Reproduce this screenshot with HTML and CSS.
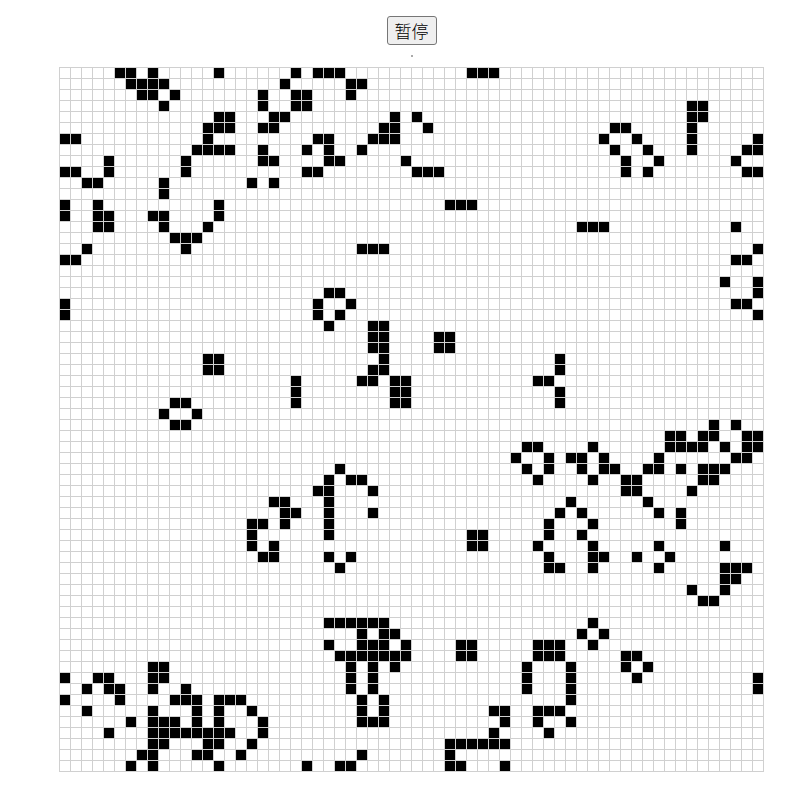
FILE: index.html
```html
<!DOCTYPE html>
<html lang="zh-CN">
<head>
    <meta charset="UTF-8">
    <meta name="viewport" content="width=device-width, initial-scale=1.0">
    <title>生命游戏</title>
    <link rel="stylesheet" href="styles.css">
</head>
<body>
    <div class="container">
        <button class="pause-button" id="pauseButton">暂停</button>
        <div class="status-dot"></div>
        <div class="life-grid" id="lifeGrid"></div>
    </div>
    <script src="script.js"></script>
</body>
</html>
```

FILE: styles.css
```css
body {
    margin: 0;
    background-color: #fff;
    font-family: "Noto Sans CJK SC", "Liberation Sans", sans-serif;
}

.container {
    display: flex;
    flex-direction: column;
    align-items: center;
    padding: 16px 0 0 15px;
}

.pause-button {
    box-sizing: border-box;
    width: 50px;
    height: 29px;
    padding: 0;
    font-family: inherit;
    font-size: 17px;
    font-weight: 300;
    line-height: 25px;
    color: #000;
    background-color: #efefef;
    border: 1px solid #767676;
    border-radius: 3px;
}

.status-dot {
    width: 2px;
    height: 2px;
    margin-top: 10px;
    background-color: #aaa;
}

.life-grid {
    display: grid;
    grid-template-columns: repeat(64, 10px);
    grid-auto-rows: 10px;
    gap: 1px;
    padding: 1px;
    margin-top: 10px;
    background-color: #d0d0d0;
}

.cell {
    background-color: #fff;
}

.cell.alive {
    background-color: #000;
}
```

FILE: script.js
```js
const SIZE = 64;

// live columns of each row
const rows = [
    [5, 6, 8, 14, 21, 23, 24, 25, 37, 38, 39],
    [6, 7, 8, 9, 20, 26, 27],
    [7, 8, 10, 18, 21, 22, 26],
    [9, 18, 21, 22, 57, 58],
    [14, 15, 19, 20, 30, 32, 57, 58],
    [13, 14, 15, 18, 19, 29, 30, 33, 50, 51, 57],
    [0, 1, 13, 23, 24, 28, 29, 30, 49, 52, 57, 63],
    [12, 13, 14, 15, 18, 22, 24, 27, 50, 53, 57, 62, 63],
    [4, 11, 18, 19, 24, 25, 31, 51, 54, 61],
    [0, 1, 4, 11, 22, 23, 32, 33, 34, 51, 53, 62, 63],
    [2, 3, 9, 17, 19],
    [9],
    [0, 3, 14, 35, 36, 37],
    [0, 3, 4, 8, 9, 14],
    [3, 4, 9, 13, 47, 48, 49, 61],
    [10, 11, 12],
    [2, 11, 27, 28, 29, 63],
    [0, 1, 61, 62],
    [],
    [60, 63],
    [24, 25, 63],
    [0, 23, 26, 61, 62],
    [0, 23, 25, 63],
    [24, 28, 29],
    [28, 29, 34, 35],
    [28, 29, 34, 35],
    [13, 14, 29, 45],
    [13, 14, 28, 29, 45],
    [21, 27, 28, 30, 31, 43, 44],
    [21, 30, 31, 45],
    [10, 11, 21, 30, 31, 45],
    [9, 12],
    [10, 11, 59, 61],
    [55, 56, 58, 59, 62, 63],
    [42, 43, 48, 55, 56, 57, 58, 60, 62, 63],
    [41, 44, 46, 47, 49, 54, 61, 62],
    [25, 42, 44, 47, 49, 50, 53, 54, 56, 58, 59, 60],
    [24, 26, 27, 43, 48, 51, 52, 58, 59],
    [23, 24, 28, 51, 52, 57],
    [19, 20, 24, 46, 53],
    [20, 21, 24, 28, 45, 47, 54, 56],
    [17, 18, 20, 24, 44, 48, 56],
    [17, 24, 37, 38, 44, 47],
    [17, 19, 37, 38, 43, 48, 54, 60],
    [18, 19, 24, 26, 44, 48, 49, 52, 55],
    [25, 44, 45, 48, 54, 60, 61, 62],
    [60, 61],
    [57, 60],
    [58, 59],
    [],
    [24, 25, 26, 27, 28, 29, 48],
    [27, 29, 30, 47, 49],
    [24, 27, 28, 29, 31, 36, 37, 43, 44, 45, 48],
    [25, 26, 27, 28, 29, 30, 31, 36, 37, 43, 44, 45, 51, 52],
    [8, 9, 26, 28, 30, 42, 46, 51, 53],
    [0, 3, 4, 8, 9, 26, 28, 42, 46, 52, 63],
    [2, 4, 5, 8, 11, 26, 28, 42, 46, 63],
    [0, 5, 10, 11, 12, 14, 15, 16, 27, 29, 46],
    [2, 8, 12, 14, 17, 27, 29, 39, 40, 43, 44, 45],
    [6, 8, 9, 10, 12, 14, 18, 27, 28, 29, 40, 43, 46],
    [4, 8, 9, 10, 11, 12, 13, 14, 15, 18, 39, 44],
    [8, 9, 13, 14, 17, 35, 36, 37, 38, 39, 40],
    [7, 8, 12, 13, 16, 27, 35],
    [6, 8, 14, 22, 25, 26, 35, 36, 40]
];

const grid = document.getElementById("lifeGrid");

for (let r = 0; r < SIZE; r++) {
    for (let c = 0; c < SIZE; c++) {
        const cell = document.createElement("div");
        cell.classList.add("cell");
        if (rows[r].includes(c)) {
            cell.classList.add("alive");
        }
        grid.appendChild(cell);
    }
}
```
